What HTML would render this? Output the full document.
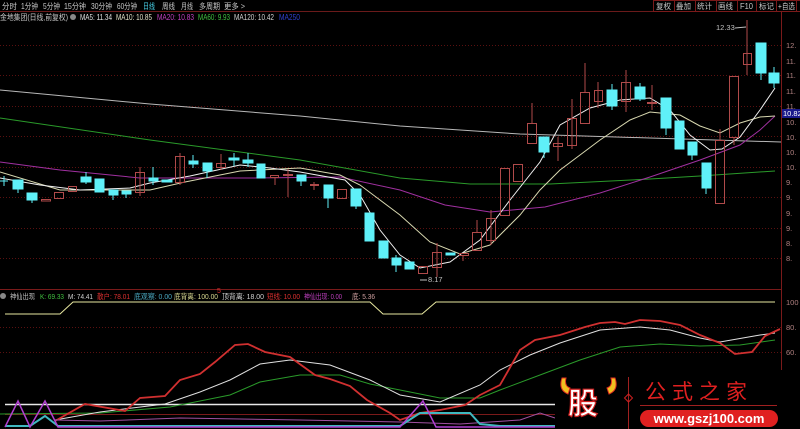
<!DOCTYPE html>
<html><head><meta charset="utf-8"><style>
html,body{margin:0;padding:0;background:#000;width:800px;height:429px;overflow:hidden}
svg{display:block}
text{font-family:"Liberation Sans","Noto Sans CJK SC",sans-serif}
</style></head><body>
<svg width="800" height="429" viewBox="0 0 800 429" xmlns="http://www.w3.org/2000/svg">
<rect width="800" height="429" fill="#000"/>
<!-- toolbar -->
<line x1="0" y1="11.5" x2="800" y2="11.5" stroke="#6a1a1a"/>
<g font-size="8" fill="#c8c8c8" lengthAdjust="spacingAndGlyphs">
<text x="2" y="9" textLength="15" lengthAdjust="spacingAndGlyphs">分时</text>
<text x="21" y="9" textLength="17" lengthAdjust="spacingAndGlyphs">1分钟</text>
<text x="43" y="9" textLength="17" lengthAdjust="spacingAndGlyphs">5分钟</text>
<text x="64" y="9" textLength="22" lengthAdjust="spacingAndGlyphs">15分钟</text>
<text x="91" y="9" textLength="21" lengthAdjust="spacingAndGlyphs">30分钟</text>
<text x="117" y="9" textLength="20" lengthAdjust="spacingAndGlyphs">60分钟</text>
<text x="143" y="9" fill="#4ad8f0" textLength="12" lengthAdjust="spacingAndGlyphs">日线</text>
<text x="162" y="9" textLength="13" lengthAdjust="spacingAndGlyphs">周线</text>
<text x="181" y="9" textLength="12" lengthAdjust="spacingAndGlyphs">月线</text>
<text x="199" y="9" textLength="21" lengthAdjust="spacingAndGlyphs">多周期</text>
<text x="224" y="9" textLength="21" lengthAdjust="spacingAndGlyphs">更多 &gt;</text>
</g>
<g stroke="#7a1a1a" fill="none">
<rect x="653.5" y="0.5" width="21" height="11"/><rect x="674.5" y="0.5" width="21" height="11"/><rect x="695.5" y="0.5" width="21" height="11"/><rect x="716.5" y="0.5" width="21" height="11"/><rect x="737.5" y="0.5" width="19" height="11"/><rect x="756.5" y="0.5" width="20" height="11"/><rect x="776.5" y="0.5" width="20" height="11"/><rect x="796.5" y="0.5" width="10" height="11"/>
</g>
<g font-size="8" fill="#c8c8c8">
<text x="656" y="9" textLength="15" lengthAdjust="spacingAndGlyphs">复权</text>
<text x="676" y="9" textLength="15" lengthAdjust="spacingAndGlyphs">叠加</text>
<text x="697" y="9" textLength="15" lengthAdjust="spacingAndGlyphs">统计</text>
<text x="718" y="9" textLength="15" lengthAdjust="spacingAndGlyphs">画线</text>
<text x="740" y="9" textLength="13" lengthAdjust="spacingAndGlyphs">F10</text>
<text x="759" y="9" textLength="15" lengthAdjust="spacingAndGlyphs">标记</text>
<text x="778" y="9" textLength="17" lengthAdjust="spacingAndGlyphs">+自选</text>
</g>
<!-- title -->
<g font-size="8">
<text x="0" y="20" fill="#c8c8c8" textLength="68" lengthAdjust="spacingAndGlyphs">金地集团(日线,前复权)</text>
<circle cx="73" cy="17" r="3" fill="#888"/>
<text x="80" y="20" fill="#e0e0e0" textLength="32" lengthAdjust="spacingAndGlyphs">MA5: 11.34</text>
<text x="116" y="20" fill="#e0e0c8" textLength="36" lengthAdjust="spacingAndGlyphs">MA10: 10.85</text>
<text x="157" y="20" fill="#c040c0" textLength="37" lengthAdjust="spacingAndGlyphs">MA20: 10.83</text>
<text x="198" y="20" fill="#40c040" textLength="32" lengthAdjust="spacingAndGlyphs">MA60: 9.93</text>
<text x="234" y="20" fill="#d0d0d0" textLength="40" lengthAdjust="spacingAndGlyphs">MA120: 10.42</text>
<text x="279" y="20" fill="#3040d0" textLength="21" lengthAdjust="spacingAndGlyphs">MA250</text>
</g>
<!-- axis -->
<line x1="781.5" y1="12" x2="781.5" y2="429" stroke="#7a1a1a"/>
<g stroke="#5a1010" stroke-dasharray="1,2">
<line x1="0" y1="45.5" x2="781" y2="45.5"/><line x1="0" y1="75.5" x2="781" y2="75.5"/><line x1="0" y1="106.5" x2="781" y2="106.5"/><line x1="0" y1="136.5" x2="781" y2="136.5"/><line x1="0" y1="167.5" x2="781" y2="167.5"/><line x1="0" y1="197.5" x2="781" y2="197.5"/><line x1="0" y1="228.5" x2="781" y2="228.5"/><line x1="0" y1="258.5" x2="781" y2="258.5"/>
<line x1="0" y1="327.5" x2="781" y2="327.5"/><line x1="0" y1="352.5" x2="781" y2="352.5"/>
</g>
<line x1="0" y1="289.5" x2="781" y2="289.5" stroke="#7a1a1a"/>
<g font-size="7.5" fill="#b08080">
<text x="786" y="48">12.</text><text x="786" y="64">11.</text><text x="786" y="78">11.</text><text x="786" y="94">11.</text><text x="786" y="109">11.</text><text x="786" y="125">10.</text><text x="786" y="140">10.</text><text x="786" y="155">10.</text><text x="786" y="170">10.</text><text x="786" y="185">9.</text><text x="786" y="200">9.</text><text x="786" y="216">9.</text><text x="786" y="231">9.</text><text x="786" y="246">8.</text><text x="786" y="261">8.</text>
<text x="786" y="305">100</text><text x="786" y="330">80.</text><text x="786" y="355">60.</text>
</g>
<rect x="782" y="109" width="18" height="9" fill="#1a1a8a"/>
<text x="783" y="116" font-size="7.5" fill="#fff">10.82</text>
<!-- MAs -->
<g fill="none" stroke-width="1">
<polyline stroke="#b8b8b8" points="0,90 150,104 300,116 400,126 520,134 650,138 781,142"/>
<polyline stroke="#2a9a2a" points="0,118 150,140 300,160 400,178 470,184 550,184 650,179 700,176 775,171"/>
<polyline stroke="#a030a0" points="0,162 60,170 140,178 250,178 340,177 400,190 445,205 490,212 545,207 600,193 650,177 700,160 740,145 760,130 775,116"/>
<polyline stroke="#d8d8b0" points="0,172 60,190 150,190 185,182 240,171 300,168 340,175 360,185 380,200 400,215 430,242 460,254 490,245 520,215 540,190 560,170 600,140 630,120 650,112 680,115 700,126 720,133 740,123 760,117 775,116"/>
<polyline stroke="#f0f0f0" points="0,178 40,185 80,190 130,188 150,183 190,176 240,165 270,168 300,172 345,180 360,195 380,230 400,255 420,268 450,262 480,240 510,200 540,162 560,125 590,108 620,100 650,98 670,110 690,135 710,150 722,149 740,137 760,110 775,88"/>
</g>
<!-- candles -->
<g fill="#5ff0f8" stroke="#5ff0f8">
<rect x="13" y="180" width="10" height="9"/><rect x="27" y="193" width="10" height="7"/><rect x="81" y="177" width="10" height="5"/><rect x="95" y="179" width="9" height="13"/><rect x="109" y="190" width="9" height="5"/><rect x="122" y="191" width="9" height="3"/><rect x="149" y="178" width="9" height="3"/><rect x="162" y="180" width="10" height="2"/><rect x="189" y="161" width="9" height="3"/><rect x="203" y="163" width="9" height="8"/><rect x="229" y="158" width="10" height="2"/><rect x="243" y="160" width="10" height="3"/><rect x="257" y="164" width="8" height="14"/><rect x="297" y="175" width="9" height="6"/><rect x="324" y="185" width="9" height="13"/><rect x="351" y="189" width="10" height="17"/><rect x="365" y="213" width="9" height="28"/><rect x="379" y="241" width="9" height="17"/><rect x="392" y="258" width="9" height="7"/><rect x="405" y="262" width="9" height="7"/><rect x="446" y="253" width="9" height="2"/><rect x="539" y="137" width="10" height="15"/><rect x="607" y="90" width="10" height="16"/><rect x="635" y="87" width="10" height="12"/><rect x="661" y="98" width="10" height="30"/><rect x="675" y="121" width="9" height="28"/><rect x="688" y="142" width="9" height="13"/><rect x="702" y="163" width="9" height="25"/><rect x="756" y="43" width="10" height="30"/><rect x="769" y="73" width="10" height="10"/>
</g>
<g stroke="#5ff0f8">
<line x1="18" y1="189" x2="18" y2="193"/><line x1="32" y1="200" x2="32" y2="203"/><line x1="86" y1="172" x2="86" y2="184"/><line x1="113" y1="195" x2="113" y2="200"/><line x1="126" y1="194" x2="126" y2="198"/><line x1="153" y1="167" x2="153" y2="185"/><line x1="193" y1="155" x2="193" y2="168"/><line x1="207" y1="171" x2="207" y2="178"/><line x1="234" y1="153" x2="234" y2="166"/><line x1="248" y1="153" x2="248" y2="167"/><line x1="301" y1="181" x2="301" y2="186"/><line x1="328" y1="198" x2="328" y2="208"/><line x1="356" y1="206" x2="356" y2="209"/><line x1="396" y1="255" x2="396" y2="272"/><line x1="0" y1="181" x2="8" y2="181"/><line x1="4" y1="176" x2="4" y2="186"/><line x1="544" y1="152" x2="544" y2="158"/><line x1="612" y1="84" x2="612" y2="110"/><line x1="640" y1="83" x2="640" y2="101"/><line x1="666" y1="128" x2="666" y2="135"/><line x1="692" y1="155" x2="692" y2="160"/><line x1="706" y1="188" x2="706" y2="194"/><line x1="761" y1="73" x2="761" y2="80"/><line x1="774" y1="67" x2="774" y2="88"/>
</g>
<g fill="none" stroke="#b04a4a">
<rect x="41.5" y="199.5" width="9" height="1.5"/><rect x="54.5" y="192.5" width="9" height="6"/><rect x="68.5" y="186.5" width="8" height="5"/><rect x="135.5" y="172.5" width="9" height="20"/><rect x="175.5" y="156.5" width="9" height="26"/><rect x="216.5" y="163.5" width="9" height="4"/><rect x="270.5" y="175.5" width="8" height="2"/><rect x="283.5" y="174.5" width="9" height="1"/><rect x="310.5" y="184.5" width="8" height="1"/><rect x="337.5" y="189.5" width="9" height="9"/><rect x="418.5" y="266.5" width="9" height="7"/><rect x="432.5" y="252.5" width="9" height="15"/><rect x="459.5" y="253.5" width="9" height="2"/><rect x="472.5" y="232.5" width="9" height="18"/><rect x="486.5" y="218.5" width="9" height="22"/><rect x="500.5" y="168.5" width="9" height="47"/><rect x="513.5" y="164.5" width="9" height="17"/><rect x="527.5" y="123.5" width="9" height="20"/><rect x="553.5" y="143.5" width="9" height="3"/><rect x="567.5" y="118.5" width="9" height="27"/><rect x="580.5" y="92.5" width="9" height="31"/><rect x="594.5" y="90.5" width="8" height="11"/><rect x="621.5" y="82.5" width="9" height="19"/><rect x="647.5" y="102.5" width="9" height="1"/><rect x="715.5" y="140.5" width="9" height="63"/><rect x="729.5" y="76.5" width="9" height="61"/><rect x="743.5" y="53.5" width="8" height="11"/>
<line x1="140" y1="167" x2="140" y2="196"/><line x1="180" y1="153" x2="180" y2="185"/><line x1="221" y1="154" x2="221" y2="170"/><line x1="275" y1="178" x2="275" y2="185"/><line x1="288" y1="169" x2="288" y2="197"/><line x1="314" y1="182" x2="314" y2="190"/><line x1="437" y1="243" x2="437" y2="277"/><line x1="463" y1="255" x2="463" y2="261"/><line x1="477" y1="220" x2="477" y2="233"/><line x1="491" y1="210" x2="491" y2="245"/><line x1="532" y1="103" x2="532" y2="123"/><line x1="558" y1="137" x2="558" y2="161"/><line x1="572" y1="99" x2="572" y2="149"/><line x1="585" y1="63" x2="585" y2="93"/><line x1="598" y1="82" x2="598" y2="108"/><line x1="626" y1="70" x2="626" y2="112"/><line x1="652" y1="85" x2="652" y2="110"/><line x1="720" y1="129" x2="720" y2="140"/><line x1="734" y1="137" x2="734" y2="145"/><line x1="747" y1="20" x2="747" y2="75"/>
</g>
<text x="716" y="30" font-size="7.5" fill="#c0c0c0">12.33</text>
<line x1="735" y1="28" x2="746" y2="27" stroke="#c0c0c0"/>
<text x="428" y="282" font-size="7.5" fill="#c0c0c0">8.17</text>
<line x1="420" y1="280" x2="427" y2="280" stroke="#c0c0c0"/>
<text x="217" y="293" font-size="7" fill="#e03030">5</text>
<!-- indicator header -->
<g font-size="7.5">
<circle cx="3" cy="296" r="3" fill="#888"/>
<text x="10" y="299" fill="#c0c0c0" textLength="25" lengthAdjust="spacingAndGlyphs">神仙出现</text>
<text x="40" y="299" fill="#40c040" textLength="24" lengthAdjust="spacingAndGlyphs">K: 69.33</text>
<text x="68" y="299" fill="#d0d0d0" textLength="25" lengthAdjust="spacingAndGlyphs">M: 74.41</text>
<text x="97" y="299" fill="#e03030" textLength="33" lengthAdjust="spacingAndGlyphs">散户: 78.01</text>
<text x="134" y="299" fill="#4aa8c0" textLength="38" lengthAdjust="spacingAndGlyphs">底观察: 0.00</text>
<text x="174" y="299" fill="#d8d890" textLength="44" lengthAdjust="spacingAndGlyphs">底背离: 100.00</text>
<text x="222" y="299" fill="#d0d0d0" textLength="42" lengthAdjust="spacingAndGlyphs">顶背离: 18.00</text>
<text x="267" y="299" fill="#e03030" textLength="33" lengthAdjust="spacingAndGlyphs">短线: 10.00</text>
<text x="304" y="299" fill="#c040c0" textLength="38" lengthAdjust="spacingAndGlyphs">神仙出现: 0.00</text>
<text x="352" y="299" fill="#d0a0a0" textLength="23" lengthAdjust="spacingAndGlyphs">底: 5.36</text>
</g>
<!-- indicator lines -->
<g fill="none" stroke-width="1">
<polyline stroke="#e8e8a0" points="5,314 60,314 73,302 370,302 383,314 422,314 436,302 775,302"/>
<line x1="5" y1="404.5" x2="555" y2="404.5" stroke="#e8e8e8" stroke-width="1.5"/>
<line x1="5" y1="414.5" x2="555" y2="414.5" stroke="#7a1a1a"/>
<polyline stroke="#2a9a2a" points="0,414 100,413 170,407 230,395 260,382 300,375 340,375 370,384 400,390 440,398 480,398 500,390 540,375 580,360 620,347 660,344 700,346 740,345 775,340"/>
<polyline stroke="#e0e0e0" points="55,420 100,412 165,404 200,392 230,380 260,364 290,360 330,365 370,380 400,395 440,402 480,385 500,370 530,355 560,343 600,330 640,327 670,330 700,338 720,342 760,335 775,333"/>
<polyline stroke="#d03030" stroke-width="1.8" points="55,421 85,404 125,411 140,398 165,396 180,380 200,374 215,362 235,345 248,344 265,352 290,357 315,375 330,379 350,386 367,400 390,413 400,420 420,413 440,410 465,405 480,395 500,385 520,350 535,340 560,335 585,327 600,323 615,322 625,324 640,320 660,321 680,325 700,335 720,343 735,354 752,352 765,336 780,329"/>
<polyline stroke="#a050a0" points="55,420 100,421 180,418 300,420 400,422 460,424 520,420 540,413 555,418"/>
<polyline stroke="#40b8c0" stroke-width="2" points="5,426 30,426 45,416 58,426 400,426 420,413 470,413 480,424 500,426 555,426"/>
<polyline stroke="#b040d0" stroke-width="1.5" points="5,427 18,401 30,427 45,401 58,427 400,427 423,401 436,427 555,427"/>
</g>
<!-- logo -->
<rect x="555" y="370" width="245" height="59" fill="#000"/>
<path d="M562,378 q-4,12 6,16 l2,-6 q-6,-2 -4,-10z" fill="#f0c020" stroke="#e03020"/>
<path d="M615,378 q4,12 -6,16 l-2,-6 q6,-2 4,-10z" fill="#f0c020" stroke="#e03020"/>
<text x="568" y="414" font-size="30" font-weight="bold" fill="#fff" stroke="#d02020" stroke-width="1.2" font-family="Noto Sans CJK SC,sans-serif">股</text>
<line x1="628.5" y1="377" x2="628.5" y2="429" stroke="#a02020"/>
<path d="M628.5,394 l4,4 -4,4 -4,-4z" fill="none" stroke="#d02020"/>
<text x="645" y="399" font-size="21" fill="#e02020" letter-spacing="6" font-family="Noto Sans CJK SC,sans-serif">公式之家</text>
<line x1="640" y1="405.5" x2="777" y2="405.5" stroke="#a02020"/>
<rect x="640" y="410" width="138" height="17" rx="8.5" fill="#e02020"/>
<text x="709" y="423" font-size="13" font-weight="bold" fill="#fff" text-anchor="middle">www.gszj100.com</text>
</svg>
</body></html>
